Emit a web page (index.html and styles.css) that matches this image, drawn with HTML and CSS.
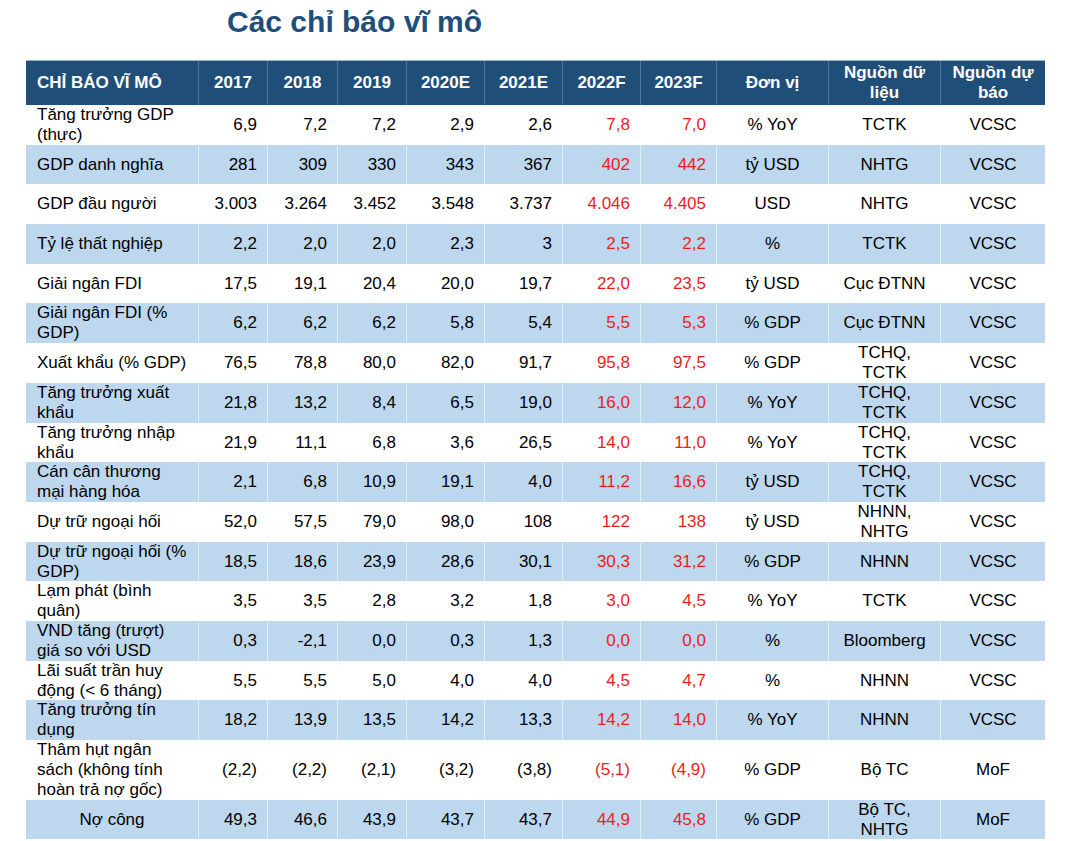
FILE: index.html
```html
<!DOCTYPE html>
<html lang="vi">
<head>
<meta charset="utf-8">
<title>Các chỉ báo vĩ mô</title>
<link rel="stylesheet" href="styles.css">
</head>
<body>
<div class="page">
  <h1 class="title">Các chỉ báo vĩ mô</h1>
  <div class="table">
    <div class="row head">
      <div class="c lbl">CHỈ BÁO VĨ MÔ</div>
      <div class="c ctr">2017</div>
      <div class="c ctr">2018</div>
      <div class="c ctr">2019</div>
      <div class="c ctr">2020E</div>
      <div class="c ctr">2021E</div>
      <div class="c ctr">2022F</div>
      <div class="c ctr">2023F</div>
      <div class="c ctr">Đơn vị</div>
      <div class="c ctr">Nguồn dữ<br>liệu</div>
      <div class="c ctr">Nguồn dự<br>báo</div>
    </div>

    <div class="row">
      <div class="c lbl">Tăng trưởng GDP (thực)</div>
      <div class="c num">6,9</div><div class="c num">7,2</div><div class="c num">7,2</div><div class="c num">2,9</div><div class="c num">2,6</div>
      <div class="c num red">7,8</div><div class="c num red">7,0</div>
      <div class="c ctr">% YoY</div><div class="c ctr">TCTK</div><div class="c ctr">VCSC</div>
    </div>
    <div class="row alt">
      <div class="c lbl">GDP danh nghĩa</div>
      <div class="c num">281</div><div class="c num">309</div><div class="c num">330</div><div class="c num">343</div><div class="c num">367</div>
      <div class="c num red">402</div><div class="c num red">442</div>
      <div class="c ctr">tỷ USD</div><div class="c ctr">NHTG</div><div class="c ctr">VCSC</div>
    </div>
    <div class="row">
      <div class="c lbl">GDP đầu người</div>
      <div class="c num">3.003</div><div class="c num">3.264</div><div class="c num">3.452</div><div class="c num">3.548</div><div class="c num">3.737</div>
      <div class="c num red">4.046</div><div class="c num red">4.405</div>
      <div class="c ctr">USD</div><div class="c ctr">NHTG</div><div class="c ctr">VCSC</div>
    </div>
    <div class="row alt">
      <div class="c lbl">Tỷ lệ thất nghiệp</div>
      <div class="c num">2,2</div><div class="c num">2,0</div><div class="c num">2,0</div><div class="c num">2,3</div><div class="c num">3</div>
      <div class="c num red">2,5</div><div class="c num red">2,2</div>
      <div class="c ctr">%</div><div class="c ctr">TCTK</div><div class="c ctr">VCSC</div>
    </div>
    <div class="row">
      <div class="c lbl">Giải ngân FDI</div>
      <div class="c num">17,5</div><div class="c num">19,1</div><div class="c num">20,4</div><div class="c num">20,0</div><div class="c num">19,7</div>
      <div class="c num red">22,0</div><div class="c num red">23,5</div>
      <div class="c ctr">tỷ USD</div><div class="c ctr">Cục ĐTNN</div><div class="c ctr">VCSC</div>
    </div>
    <div class="row alt">
      <div class="c lbl">Giải ngân FDI (% GDP)</div>
      <div class="c num">6,2</div><div class="c num">6,2</div><div class="c num">6,2</div><div class="c num">5,8</div><div class="c num">5,4</div>
      <div class="c num red">5,5</div><div class="c num red">5,3</div>
      <div class="c ctr">% GDP</div><div class="c ctr">Cục ĐTNN</div><div class="c ctr">VCSC</div>
    </div>
    <div class="row">
      <div class="c lbl">Xuất khẩu (% GDP)</div>
      <div class="c num">76,5</div><div class="c num">78,8</div><div class="c num">80,0</div><div class="c num">82,0</div><div class="c num">91,7</div>
      <div class="c num red">95,8</div><div class="c num red">97,5</div>
      <div class="c ctr">% GDP</div><div class="c ctr">TCHQ,<br>TCTK</div><div class="c ctr">VCSC</div>
    </div>
    <div class="row alt">
      <div class="c lbl">Tăng trưởng xuất khẩu</div>
      <div class="c num">21,8</div><div class="c num">13,2</div><div class="c num">8,4</div><div class="c num">6,5</div><div class="c num">19,0</div>
      <div class="c num red">16,0</div><div class="c num red">12,0</div>
      <div class="c ctr">% YoY</div><div class="c ctr">TCHQ,<br>TCTK</div><div class="c ctr">VCSC</div>
    </div>
    <div class="row">
      <div class="c lbl">Tăng trưởng nhập khẩu</div>
      <div class="c num">21,9</div><div class="c num">11,1</div><div class="c num">6,8</div><div class="c num">3,6</div><div class="c num">26,5</div>
      <div class="c num red">14,0</div><div class="c num red">11,0</div>
      <div class="c ctr">% YoY</div><div class="c ctr">TCHQ,<br>TCTK</div><div class="c ctr">VCSC</div>
    </div>
    <div class="row alt">
      <div class="c lbl">Cán cân thương mại hàng hóa</div>
      <div class="c num">2,1</div><div class="c num">6,8</div><div class="c num">10,9</div><div class="c num">19,1</div><div class="c num">4,0</div>
      <div class="c num red">11,2</div><div class="c num red">16,6</div>
      <div class="c ctr">tỷ USD</div><div class="c ctr">TCHQ,<br>TCTK</div><div class="c ctr">VCSC</div>
    </div>
    <div class="row">
      <div class="c lbl">Dự trữ ngoại hối</div>
      <div class="c num">52,0</div><div class="c num">57,5</div><div class="c num">79,0</div><div class="c num">98,0</div><div class="c num">108</div>
      <div class="c num red">122</div><div class="c num red">138</div>
      <div class="c ctr">tỷ USD</div><div class="c ctr">NHNN,<br>NHTG</div><div class="c ctr">VCSC</div>
    </div>
    <div class="row alt">
      <div class="c lbl">Dự trữ ngoại hối (% GDP)</div>
      <div class="c num">18,5</div><div class="c num">18,6</div><div class="c num">23,9</div><div class="c num">28,6</div><div class="c num">30,1</div>
      <div class="c num red">30,3</div><div class="c num red">31,2</div>
      <div class="c ctr">% GDP</div><div class="c ctr">NHNN</div><div class="c ctr">VCSC</div>
    </div>
    <div class="row">
      <div class="c lbl">Lạm phát (bình quân)</div>
      <div class="c num">3,5</div><div class="c num">3,5</div><div class="c num">2,8</div><div class="c num">3,2</div><div class="c num">1,8</div>
      <div class="c num red">3,0</div><div class="c num red">4,5</div>
      <div class="c ctr">% YoY</div><div class="c ctr">TCTK</div><div class="c ctr">VCSC</div>
    </div>
    <div class="row alt">
      <div class="c lbl">VND tăng (trượt) giá so với USD</div>
      <div class="c num">0,3</div><div class="c num">-2,1</div><div class="c num">0,0</div><div class="c num">0,3</div><div class="c num">1,3</div>
      <div class="c num red">0,0</div><div class="c num red">0,0</div>
      <div class="c ctr">%</div><div class="c ctr">Bloomberg</div><div class="c ctr">VCSC</div>
    </div>
    <div class="row">
      <div class="c lbl">Lãi suất trần huy động (&lt; 6 tháng)</div>
      <div class="c num">5,5</div><div class="c num">5,5</div><div class="c num">5,0</div><div class="c num">4,0</div><div class="c num">4,0</div>
      <div class="c num red">4,5</div><div class="c num red">4,7</div>
      <div class="c ctr">%</div><div class="c ctr">NHNN</div><div class="c ctr">VCSC</div>
    </div>
    <div class="row alt">
      <div class="c lbl">Tăng trưởng tín dụng</div>
      <div class="c num">18,2</div><div class="c num">13,9</div><div class="c num">13,5</div><div class="c num">14,2</div><div class="c num">13,3</div>
      <div class="c num red">14,2</div><div class="c num red">14,0</div>
      <div class="c ctr">% YoY</div><div class="c ctr">NHNN</div><div class="c ctr">VCSC</div>
    </div>
    <div class="row tall">
      <div class="c lbl">Thâm hụt ngân sách (không tính hoàn trả nợ gốc)</div>
      <div class="c num">(2,2)</div><div class="c num">(2,2)</div><div class="c num">(2,1)</div><div class="c num">(3,2)</div><div class="c num">(3,8)</div>
      <div class="c num red">(5,1)</div><div class="c num red">(4,9)</div>
      <div class="c ctr">% GDP</div><div class="c ctr">Bộ TC</div><div class="c ctr">MoF</div>
    </div>
    <div class="row alt last">
      <div class="c ctr">Nợ công</div>
      <div class="c num">49,3</div><div class="c num">46,6</div><div class="c num">43,9</div><div class="c num">43,7</div><div class="c num">43,7</div>
      <div class="c num red">44,9</div><div class="c num red">45,8</div>
      <div class="c ctr">% GDP</div><div class="c ctr">Bộ TC,<br>NHTG</div><div class="c ctr">MoF</div>
    </div>
  </div>
</div>
</body>
</html>
```

FILE: styles.css
```css
* { box-sizing: border-box; }

html, body {
  margin: 0;
  padding: 0;
  background: #ffffff;
}

body {
  font-family: "Liberation Sans", Arial, sans-serif;
  color: #000000;
}

.page {
  width: 1068px;
  height: 841px;
  overflow: hidden;
}

.title {
  margin: 0;
  padding: 5px 0 0 227px;
  height: 60px;
  font-size: 30px;
  line-height: 34px;
  font-weight: bold;
  color: #1f4e79;
}

.table {
  margin-left: 26px;
  width: 1019px;
  border-top: 1px solid #9db3c9;
}

.row {
  display: grid;
  grid-template-columns: 172px 69px 70px 69px 78px 78px 78px 76px 112px 112px 105px;
  height: 39.69px;
  background: #ffffff;
  font-size: 17px;
  line-height: 20px;
}

.row.alt { background: #bdd7ee; }
.row.tall { height: 60px; }
.row.last { height: 39px; }

.row.head {
  height: 44px;
  background: #1f4e79;
  color: #ffffff;
  font-weight: bold;
}

.c {
  display: flex;
  align-items: center;
  border-left: 1px solid rgba(255, 255, 255, 0.55);
  white-space: normal;
}

.c:first-child { border-left: none; }

.head .c { border-left-color: rgba(255, 255, 255, 0.22); }

.lbl {
  justify-content: flex-start;
  padding: 0 8px 0 11px;
  text-align: left;
}

.num {
  justify-content: flex-end;
  padding-right: 10px;
  text-align: right;
}

.ctr {
  justify-content: center;
  text-align: center;
}

.red { color: #ee1d1d; }
```
